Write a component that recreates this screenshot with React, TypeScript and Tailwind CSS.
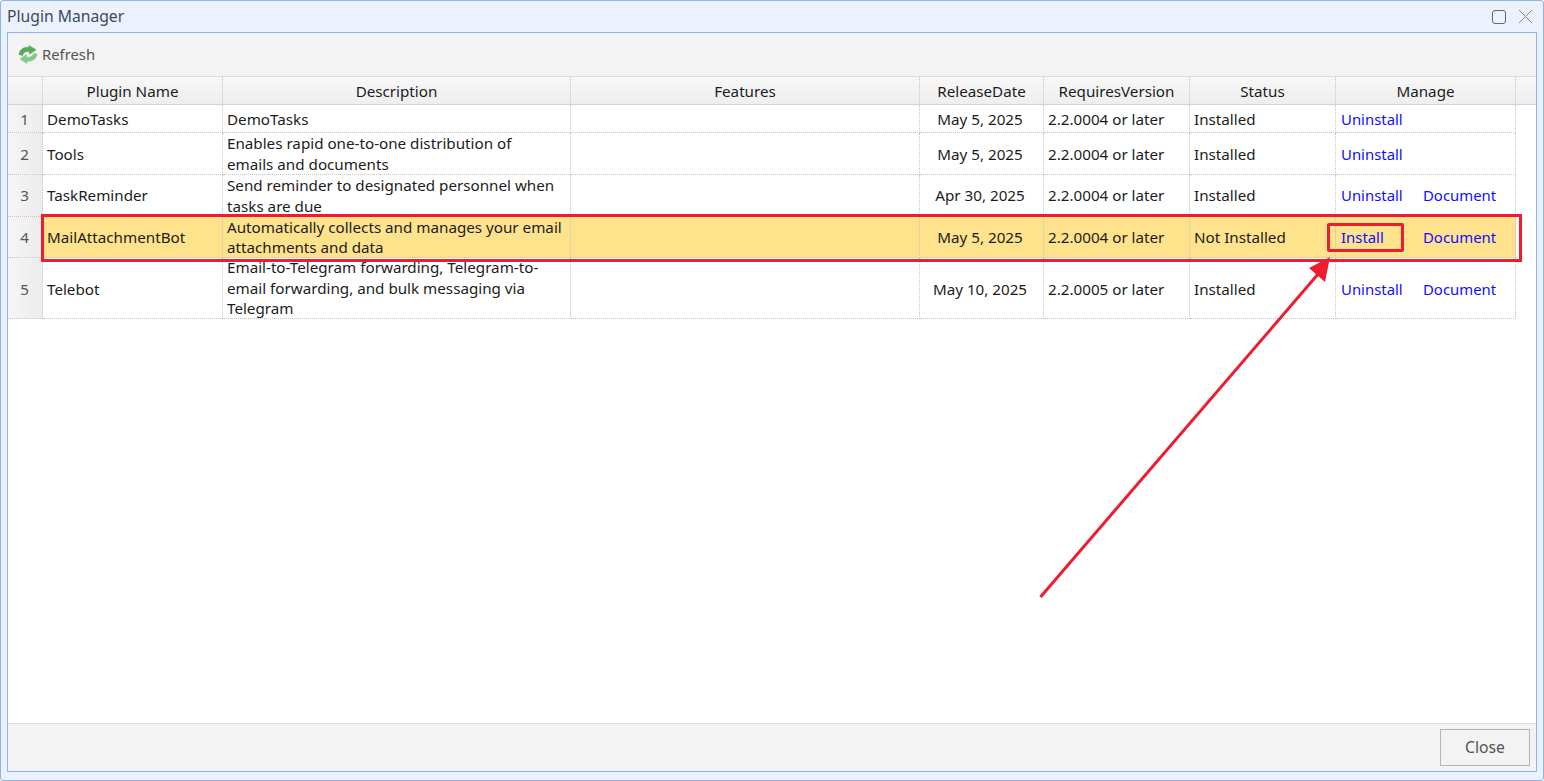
const columns = "grid w-fit grid-rows-[minmax(0,1fr)] grid-cols-[35px_180px_348px_349px_124px_146px_146px_180px]";

const headers = ["Plugin Name", "Description", "Features", "ReleaseDate", "RequiresVersion", "Status", "Manage"];

type Plugin = {
  name: string;
  description: string[];
  date: string;
  version: string;
  status: string;
  action: string;
  doc: boolean;
  height: string;
  nudge: string;
};

const plugins: Plugin[] = [
  { name: "DemoTasks", description: ["DemoTasks"], date: "May 5, 2025", version: "2.2.0004 or later", status: "Installed", action: "Uninstall", doc: false, height: "h-[28px]", nudge: "pt-[2px]" },
  { name: "Tools", description: ["Enables rapid one-to-one distribution of", "emails and documents"], date: "May 5, 2025", version: "2.2.0004 or later", status: "Installed", action: "Uninstall", doc: false, height: "h-[42px]", nudge: "pt-[2px]" },
  { name: "TaskReminder", description: ["Send reminder to designated personnel when", "tasks are due"], date: "Apr 30, 2025", version: "2.2.0004 or later", status: "Installed", action: "Uninstall", doc: true, height: "h-[42px]", nudge: "" },
  { name: "MailAttachmentBot", description: ["Automatically collects and manages your email", "attachments and data"], date: "May 5, 2025", version: "2.2.0004 or later", status: "Not Installed", action: "Install", doc: true, height: "h-[41px]", nudge: "" },
  { name: "Telebot", description: ["Email-to-Telegram forwarding, Telegram-to-", "email forwarding, and bulk messaging via", "Telegram"], date: "May 10, 2025", version: "2.2.0005 or later", status: "Installed", action: "Uninstall", doc: true, height: "h-[61px]", nudge: "pt-[2px]" },
];

const cell = "flex items-center border-r border-b border-dotted border-[#c4c4c4] whitespace-nowrap";

function RefreshIcon() {
  return (
    <svg width="20" height="19" viewBox="0 0 20 19" className="shrink-0">
      <path d="M1 9.5C1.5 4.5 6 1.5 11 2.5V0.5L18 4.8L11.5 9.2V6.8C8.5 6 5.5 7 4.5 10.5Z" fill="#5aa85a" stroke="#5aa85a" strokeWidth="0.6" />
      <path d="M19 9C18.5 14 14 17 9 16V18.5L2 14L8.5 9.6V12C11.5 12.7 14.5 11.7 15.5 8.5Z" fill="#86c986" stroke="#86c986" strokeWidth="0.6" />
    </svg>
  );
}

function Row({ plugin, index }: { plugin: Plugin; index: number }) {
  const selected = plugin.name === "MailAttachmentBot";
  return (
    <div className={`${columns} ${plugin.height} ${selected ? "bg-[#ffe28c]" : ""}`}>
      <div className={`flex items-center justify-center border-r border-b border-dotted border-[#c4c4c4] bg-gradient-to-r from-[#f6f6f6] to-[#ececec] pr-[1px] text-[#555] ${plugin.nudge}`}>
        {index + 1}
      </div>
      <div className={`${cell} pl-[4px] ${plugin.nudge}`}>{plugin.name}</div>
      <div className={`${cell} pl-[4px] leading-[20.5px] ${plugin.description.length === 1 ? plugin.nudge : ""}`}>
        <div>
          {plugin.description.map((line) => (
            <div key={line}>{line}</div>
          ))}
        </div>
      </div>
      <div className={cell} />
      <div className={`${cell} justify-center pr-[3px] ${plugin.nudge}`}>{plugin.date}</div>
      <div className={`${cell} pl-[4px] ${plugin.nudge}`}>{plugin.version}</div>
      <div className={`${cell} pl-[4px] ${plugin.nudge}`}>{plugin.status}</div>
      <div className={`${cell} pl-[5px] text-[14.9px] text-[#0f0fff] ${plugin.nudge}`}>
        <span className="w-[82px]">{plugin.action}</span>
        {plugin.doc && <span>Document</span>}
      </div>
    </div>
  );
}

export default function App() {
  return (
    <div className="relative flex h-[781px] w-[1544px] flex-col overflow-hidden rounded-[3px] border border-[#8fb4ec] bg-[#ebf2fe] font-['Noto_Sans','Open_Sans',sans-serif] text-[15.2px] text-[#1c1c1c]">
      <div className="flex h-[31px] shrink-0 items-center justify-between pl-[6px] pr-[10px]">
        <span className="text-[15.7px] text-[#3f4a57]">Plugin Manager</span>
        <div className="flex items-center gap-[12px]">
          <div className="h-[14px] w-[14px] rounded-[3px] border border-[#666]" />
          <svg width="15" height="15" viewBox="0 0 15 15" fill="none" stroke="#888" strokeWidth="1">
            <path d="M1 1L14 14M14 1L1 14" />
          </svg>
        </div>
      </div>

      <div className="mx-[6px] mb-[8px] flex min-h-0 flex-1 flex-col border border-[#8fb4ec] bg-white">
        <div className="flex h-[44px] shrink-0 items-center gap-[4px] border-b border-[#dcdcdc] bg-[#f3f3f3] pl-[10px] text-[14.8px] text-[#555]">
          <RefreshIcon />
          <span>Refresh</span>
        </div>

        <div className="flex h-[28px] shrink-0 border-b border-[#d4d4d4] bg-gradient-to-b from-[#f8f8f8] to-[#eeeeee]">
          <div className={columns}>
            <div className="border-r border-dotted border-[#c4c4c4]" />
            {headers.map((header) => (
              <div key={header} className="flex items-center justify-center border-r border-dotted border-[#c4c4c4] pt-[2px]">
                {header}
              </div>
            ))}
          </div>
        </div>

        <div className="flex-1">
          {plugins.map((plugin, index) => (
            <Row key={plugin.name} plugin={plugin} index={index} />
          ))}
        </div>

        <div className="flex h-[48px] shrink-0 items-center justify-end border-t border-[#dcdcdc] bg-[#f3f3f3] pr-[6px]">
          <button className="h-[37px] w-[90px] border border-[#b5b5b5] bg-[#f3f3f3] text-[15.7px] text-[#555]">Close</button>
        </div>
      </div>

      <div className="absolute left-[40px] top-[213px] h-[48px] w-[1481px] border-[3px] border-[#ee1c2e]" />
      <div className="absolute left-[1326px] top-[222px] h-[29px] w-[77px] rounded-[2px] border-[3px] border-[#ee1c2e]" />
      <svg className="absolute left-[1030px] top-[250px]" width="310" height="360" viewBox="0 0 310 360" fill="none">
        <path d="M9.5 346L288 22" stroke="#ee1c2e" strokeWidth="3" />
        <path d="M299 6L294 31L278 17Z" fill="#ee1c2e" />
      </svg>
    </div>
  );
}
